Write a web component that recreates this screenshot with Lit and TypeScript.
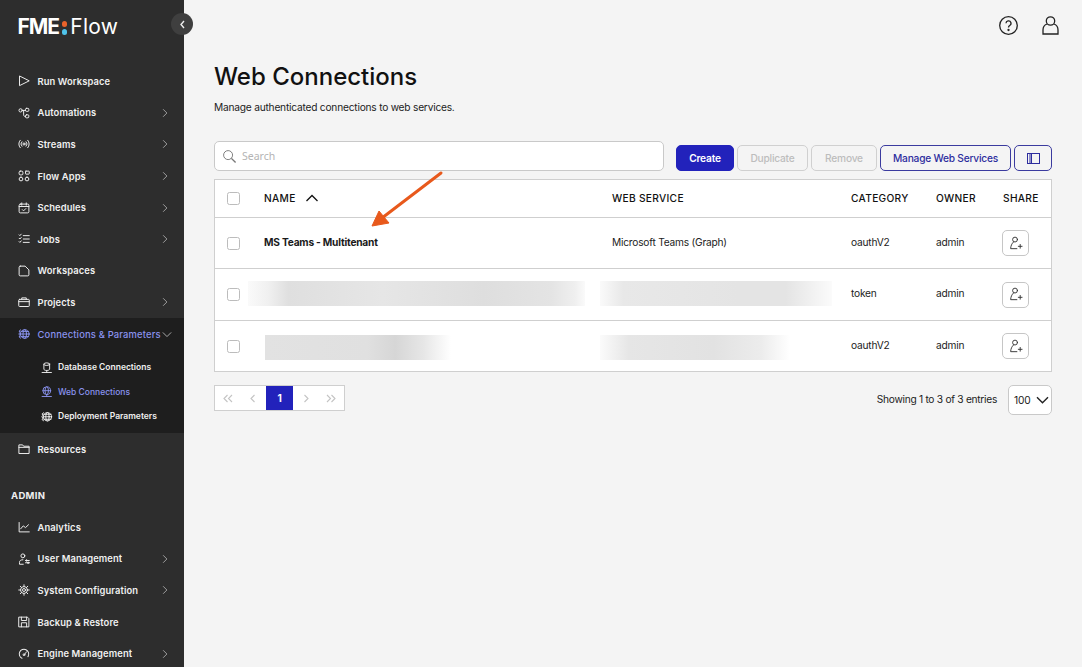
import { LitElement, html, css, svg } from "lit";
import { customElement } from "lit/decorators.js";

const s = (body: unknown, cls = "ic") => html`<svg class=${cls} viewBox="0 0 16 16" fill="none" stroke="currentColor" stroke-width="1.300" stroke-linecap="round" stroke-linejoin="round">${body}</svg>`;

const gear = svg`<circle cx="8" cy="8" r="4.600"/><circle cx="8" cy="8" r="2"/><path d="M8 1v2.200M8 12.800V15M1 8h2.200M12.800 8H15M3 3l1.600 1.600M11.400 11.400 13 13M3 13l1.600-1.600M11.400 4.600 13 3"/>`;
const globeGear = svg`<circle cx="9" cy="8" r="5.800"/><ellipse cx="9" cy="8" rx="2.400" ry="5.800"/><path d="M3.200 8h11.600M4 4.500h10M4 11.500h10M3.500 2.500 1.500 4l1 2-1.300 2 1.300 2-1 2 2 1.500"/>`;
const icons: Record<string, unknown> = {
  run: svg`<path d="M2 1.800v12.400L14.500 8z"/>`,
  auto: svg`<circle cx="3.500" cy="4.500" r="2.200"/><rect x="10" y="1.800" width="4.400" height="4" rx="1.200"/><rect x="10" y="10.400" width="4.400" height="4" rx="1.200"/><path d="M5.700 4.500H10M7.500 4.500v6c0 1 .6 2 1.500 2h1"/>`,
  streams: svg`<circle cx="8" cy="8" r="1.400"/><path d="M5.200 5a4.200 4.200 0 0 0 0 6M10.800 5a4.200 4.200 0 0 1 0 6M3 3a7.200 7.200 0 0 0 0 10M13 3a7.200 7.200 0 0 1 0 10"/>`,
  apps: svg`<rect x="1.500" y="1.500" width="5" height="5" rx="1.500"/><rect x="10" y="1.500" width="5" height="4" rx=".6"/><rect x="1.500" y="9.500" width="5" height="5" rx="2.500"/><rect x="9.500" y="9.500" width="5" height="5" rx="2.500"/>`,
  sched: svg`<rect x="1.500" y="2.800" width="13" height="11.700" rx="1.600"/><path d="M1.500 6h13M5 1.200v3M11 1.200v3M5.800 10.200l1.600 1.600 3-3"/>`,
  jobs: svg`<path d="M7 3.500h8M7 8h8M7 12.500h8M1.500 2.500l1 1 1.800-2M1.500 7l1 1 1.800-2M1.500 11.500l1 1 1.800-2"/>`,
  work: svg`<path d="M3 1.500h6.500L14.500 6.500V13a1.500 1.500 0 0 1-1.500 1.500H3A1.500 1.500 0 0 1 1.500 13V3A1.500 1.500 0 0 1 3 1.500z"/>`,
  proj: svg`<rect x="1" y="4.500" width="14" height="9.500" rx="1"/><path d="M5 4.500V2.500h6v2M1 7.500h14"/>`,
  conn: globeGear,
  db: svg`<ellipse cx="8" cy="3" rx="4" ry="1.800"/><path d="M4 3v7c0 1 1.800 1.800 4 1.800s4-.8 4-1.800V3M8 11.800v2.600M1.500 14.600h13"/>`,
  web: svg`<circle cx="8" cy="6.500" r="5.400"/><ellipse cx="8" cy="6.500" rx="2.400" ry="5.400"/><path d="M2.600 6.500h10.800M8 12v2.500M1.500 14.600h13"/>`,
  dep: globeGear,
  res: svg`<path d="M1.200 13.500v-11h5l1.300 1.800h7.300v9.200zM1.200 5.800h13.600"/>`,
  ana: svg`<path d="M1.500 2v12.500H15M3.500 10.500l3.500-4 3 2.300 4-3.800"/>`,
  user: svg`<circle cx="6.500" cy="3.800" r="2.600"/><path d="M6.500 9c-3 0-4.500 1.300-4.500 3.500V15h5M10 10h5M10 13h5"/><circle cx="11.500" cy="10" r="1"/><circle cx="13.500" cy="13" r="1"/>`,
  sys: gear,
  back: svg`<path d="M1.500 1.500h11l2 2v11h-13zM4.500 1.500v4.500h7V1.500M4.500 14.500V9h7v5.500"/>`,
  eng: svg`<circle cx="8" cy="8" r="6.300" stroke-dasharray="30 9" transform="rotate(115 8 8)"/><circle cx="8" cy="9" r="1.200"/><path d="M9 8l2.500-3"/>`,
};

const chevR = html`<svg class="chev" viewBox="0 0 8 12" fill="none" stroke="currentColor" stroke-width="1.200"><path d="M1.500 1 6.500 6l-5 5"/></svg>`;
const chevD = html`<svg class="chev-d" viewBox="0 0 12 8" fill="none" stroke="currentColor" stroke-width="1.200"><path d="M1 1.500 6 6.500l5-5"/></svg>`;
const shareIcon = html`<svg class="share-ic" viewBox="0 0 16 16" fill="none" stroke="currentColor" stroke-width="1" stroke-linecap="round"><circle cx="7.500" cy="3.800" r="2.600"/><path d="M5.800 6.500C4 8 3 10.500 2.800 13.500H9.500M11 11h4M13 9v4"/></svg>`;

const top = [
  ["run", "Run Workspace", 0], ["auto", "Automations", 1], ["streams", "Streams", 1], ["apps", "Flow Apps", 1],
  ["sched", "Schedules", 1], ["jobs", "Jobs", 1], ["work", "Workspaces", 0], ["proj", "Projects", 1],
] as const;
const subs = [["db", "Database Connections", 0], ["web", "Web Connections", 1], ["dep", "Deployment Parameters", 0]] as const;
const admin = [
  ["ana", "Analytics", 0], ["user", "User Management", 1], ["sys", "System Configuration", 1],
  ["back", "Backup & Restore", 0], ["eng", "Engine Management", 1],
] as const;

const rows = [
  { name: "MS Teams - Multitenant", svc: "Microsoft Teams (Graph)", cat: "oauthV2", h: 51 },
  { cat: "token", h: 52, blurA: "blur a2", blurB: "blur b2" },
  { cat: "oauthV2", h: 51, blurA: "blur a3", blurB: "blur b3" },
];

@customElement("app-root")
export class AppRoot extends LitElement {
  static styles = css`
    :host { display: block; width: 1082px; height: 667px; overflow: hidden; font-family: Inter, "Liberation Sans", sans-serif; position: relative; }
    .page { display: flex; height: 667px; background: #f4f4f4; }
    .side { width: 184px; flex: none; background: #2d2d2d; color: #f0f0f0; overflow: hidden; position: relative; }
    .logo { height: 65.500px; box-sizing: border-box; padding: 13px 0 0 17.500px; display: flex; align-items: flex-start; font-size: 21px; line-height: 28px; color: #fff; }
    .logo b { font-weight: 700; letter-spacing: -1.100px; }
    .logo .dots { display: flex; flex-direction: column; gap: 2.500px; margin: 8px 3px 0 3px; }
    .logo i { width: 5.500px; height: 5.500px; border-radius: 50%; background: #e8622a; display: block; }
    .logo i + i { background: #4fc3ea; }
    .logo span { font-weight: 400; letter-spacing: .2px; }
    .item { height: 31.600px; display: flex; align-items: center; padding-left: 18px; font-size: 9.400px; font-weight: 600; letter-spacing: .1px; }
    .ic { width: 12px; height: 12px; flex: none; margin-right: 7.500px; }
    .label { flex: 1; white-space: nowrap; }
    .chev { width: 6px; height: 10px; margin-right: 16px; color: #a8a8a8; flex: none; }
    .chev-d { width: 10px; height: 7px; color: #a8a8a8; flex: none; margin-right: 12px; margin-left: 1px; }
    .section { background: #1e1e1e; padding-bottom: 5px; height: 115.200px; box-sizing: border-box; }
    .section > .item { color: #8a93ee; font-weight: 500; letter-spacing: .17px; }
    .section > .item .label { flex: none; }
    .subs { padding-top: 5.400px; }
    .sub { height: 24.500px; display: flex; align-items: center; padding-left: 41px; font-size: 8.500px; font-weight: 600; }
    .sub .ic { width: 11.500px; height: 11.500px; margin-right: 5.500px; }
    .sub.on { color: #8a93ee; font-weight: 500; }
    .admin { padding: 20.800px 0 5.600px 11px; font-size: 9.500px; line-height: 20px; font-weight: 700; letter-spacing: .3px; }
    .collapse { position: absolute; left: 171px; top: 13px; width: 22px; height: 22px; border-radius: 50%; background: #3f3f3f; color: #eee; display: flex; align-items: center; justify-content: center; z-index: 2; }
    .collapse svg { width: 7px; height: 9px; }

    .main { flex: 1; min-width: 0; padding: 0 30px; color: #1b1b1b; letter-spacing: -.22px; }
    .top { height: 50px; display: flex; justify-content: flex-end; align-items: center; gap: 21px; margin-right: -9px; color: #222; }
    .top svg { width: 21px; height: 21px; }
    .top svg:first-child { margin-left: -1px; }
    h1 { margin: 12px 0 0; font-size: 24px; line-height: 30px; font-weight: 500; color: #111; letter-spacing: 0; }
    .desc { margin: 8px 0 0; font-size: 10.200px; line-height: 14px; color: #222; }
    .tools { display: flex; align-items: flex-end; margin-top: 27px; height: 30px; }
    .search { width: 450px; height: 30px; box-sizing: border-box; border: 1px solid #c9c9c9; border-radius: 5px; background: #fff; display: flex; align-items: center; padding-left: 7px; gap: 5px; color: #b4b4b4; font-size: 10.500px; margin-right: 12px; font-family: "Noto Sans", sans-serif; letter-spacing: 0; }
    .search svg { width: 15px; height: 15px; color: #777; }
    .btn { height: 26px; box-sizing: border-box; border-radius: 5px; border: 1px solid #d0d0d0; display: flex; align-items: center; justify-content: center; font-size: 10.200px; font-weight: 500; margin-right: 3px; color: #bdbdbd; }
    .btn.pri { background: #2222bb; color: #fff; border-color: #2222bb; width: 58px; font-weight: 600; }
    .btn.out { border-color: #3b3b9f; color: #2d2d9e; }
    .dup { width: 71px; } .rem { width: 66px; } .mws { width: 131px; } .col { width: 38px; margin-right: 0; }
    .col svg { width: 13px; height: 11px; }
    .table { margin-top: 8px; background: #fff; border: 1px solid #cfcfcf; box-sizing: border-box; height: 193px; }
    .row { display: grid; grid-template-columns: 49px 348px 239px 85px 67px 1fr; align-items: center; border-top: 1px solid #cfcfcf; font-size: 10.200px; color: #222; box-sizing: border-box; }
    .row.head { border-top: 0; height: 37px; font-weight: 500; color: #111; letter-spacing: .3px; }
    .t { padding-bottom: 3px; }
    .head .t { padding-bottom: 2px; }
    .cb { width: 13px; height: 13px; box-sizing: border-box; border: 1px solid #bcbcbc; border-radius: 2.500px; margin-left: 12px; background: #fff; }
    .sort { display: flex; align-items: center; gap: 9px; }
    .sort svg { width: 14px; height: 8px; }
    .nm { font-weight: 700; color: #1a1a1a; }
    .share { width: 27px; height: 26px; box-sizing: border-box; border: 1px solid #c6c6c6; border-radius: 5px; display: flex; align-items: center; justify-content: center; color: #333; background: #fff; margin-left: -1px; }
    .share-ic { width: 15px; height: 15px; }
    .blur { height: 25px; }
    .a2 { width: 337px; margin: -2px 0 0 -16px; background: linear-gradient(90deg, #fafafa, #f0f0f0 6%, #dfdfdf 12%, #e6e6e6 40%, #dedede 70%, #e4e4e4 90%, #efefef 97%, #fafafa); }
    .b2 { width: 232px; margin: -2px 0 0 -12px; background: linear-gradient(90deg, #fafafa, #e8e8e8 10%, #e4e4e4 60%, #e4e4e4 80%, #fbfbfb); }
    .a3 { width: 186px; margin: 2px 0 0 1px; background: linear-gradient(90deg, #e2e2e2, #e0e0e0 55%, #d6d6d6 70%, #e6e6e6 85%, #fff); }
    .b3 { width: 190px; margin: 2px 0 0 -12px; background: linear-gradient(90deg, #fbfbfb, #e6e6e6 15%, #e2e2e2 60%, #ececec 85%, #fff); }
    .foot { display: flex; align-items: flex-start; margin-top: 13px; }
    .pager { display: flex; height: 26px; box-sizing: border-box; border: 1px solid #cfcfcf; background: #fff; width: 131px; }
    .pg { flex: 1; display: flex; align-items: center; justify-content: center; color: #c4c4c4; }
    .pg svg { width: 12px; height: 9px; }
    .pg.cur { background: #2222bb; color: #fff; font-size: 10px; font-weight: 700; flex: none; width: 27px; }
    .info { margin-left: auto; font-size: 10.200px; color: #222; line-height: 28px; margin-right: 11px; letter-spacing: -.28px; }
    .sel { width: 44px; height: 30px; box-sizing: border-box; border: 1px solid #c9c9c9; border-radius: 5px; background: #fff; display: flex; align-items: center; padding-left: 5px; justify-content: space-between; font-size: 10.200px; color: #222; padding-right: 2px; }
    .sel svg { width: 13px; height: 8px; }
    .arrow { position: absolute; left: 360px; top: 165px; width: 90px; height: 70px; pointer-events: none; }
  `;

  private item(i: readonly [string, string, number]) {
    return html`<div class="item">${s(icons[i[0]])}<span class="label">${i[1]}</span>${i[2] ? chevR : ""}</div>`;
  }

  private pg(d: string) {
    return html`<div class="pg"><svg viewBox="0 0 12 9" fill="none" stroke="currentColor" stroke-width="1.100"><path d=${d}/></svg></div>`;
  }

  render() {
    return html`<div class="page">
      <aside class="side">
        <div class="logo"><b>FME</b><div class="dots"><i></i><i></i></div><span>Flow</span></div>
        ${top.map((i) => this.item(i))}
        <div class="section">
          <div class="item">${s(icons.conn)}<span class="label">Connections &amp; Parameters</span>${chevD}</div>
          <div class="subs">
            ${subs.map((i) => html`<div class="sub ${i[2] ? "on" : ""}">${s(icons[i[0]])}<span>${i[1]}</span></div>`)}
          </div>
        </div>
        ${this.item(["res", "Resources", 0])}
        <div class="admin">ADMIN</div>
        ${admin.map((i) => this.item(i))}
      </aside>
      <div class="collapse"><svg viewBox="0 0 7 9" fill="none" stroke="currentColor" stroke-width="1.400"><path d="M5 1 2 4.500 5 8"/></svg></div>
      <main class="main">
        <div class="top">
          <svg viewBox="0 0 21 21" fill="none" stroke="currentColor" stroke-width="1.300"><circle cx="10.500" cy="10.500" r="8.800"/><path d="M8 8.300a2.500 2.500 0 1 1 3.700 2.200c-.8.500-1.200 1-1.200 2"/><circle cx="10.500" cy="15" r=".5" fill="currentColor"/></svg>
          <svg viewBox="0 0 21 21" fill="none" stroke="currentColor" stroke-width="1.300"><circle cx="10.500" cy="6" r="4.200"/><path d="M7 9c-3 1-4 3-4 6v4h15v-4c0-3-1-5-4-6"/></svg>
        </div>
        <h1>Web Connections</h1>
        <p class="desc">Manage authenticated connections to web services.</p>
        <div class="tools">
          <div class="search"><svg viewBox="0 0 16 16" fill="none" stroke="currentColor" stroke-width="1"><circle cx="6.500" cy="6.500" r="4.800"/><path d="m10 10 4.500 4.500" stroke-width="1.500"/></svg>Search</div>
          <div class="btn pri">Create</div>
          <div class="btn dup">Duplicate</div>
          <div class="btn rem">Remove</div>
          <div class="btn out mws">Manage Web Services</div>
          <div class="btn out col"><svg viewBox="0 0 13 11" fill="none" stroke="currentColor" stroke-width="1"><rect x=".5" y=".5" width="12" height="10"/><path d="M3 .5v10M4.500 .5v10"/></svg></div>
        </div>
        <div class="table">
          <div class="row head">
            <div class="cb"></div>
            <div class="sort t">NAME <svg viewBox="0 0 14 8" fill="none" stroke="currentColor" stroke-width="1.300"><path d="M1.500 7 7 1.500 12.500 7"/></svg></div>
            <div class="t">WEB SERVICE</div><div class="t">CATEGORY</div><div class="t">OWNER</div><div class="t">SHARE</div>
          </div>
          ${rows.map((r) => html`<div class="row" style="height:${r.h}px">
            <div class="cb"></div>
            ${r.name ? html`<div class="nm t">${r.name}</div>` : html`<div class=${r.blurA}></div>`}
            ${r.svc ? html`<div class="t">${r.svc}</div>` : html`<div class=${r.blurB}></div>`}
            <div class="t">${r.cat}</div><div class="t">admin</div>
            <div class="share">${shareIcon}</div>
          </div>`)}
        </div>
        <div class="foot">
          <div class="pager">
            ${this.pg("M5.500 1 2 4.500 5.500 8M10 1 6.500 4.500 10 8")}
            ${this.pg("M7.500 1 4 4.500 7.500 8")}
            <div class="pg cur">1</div>
            ${this.pg("M4.500 1 8 4.500 4.500 8")}
            ${this.pg("M2 1l3.500 3.500L2 8M6.500 1 10 4.500 6.500 8")}
          </div>
          <div class="info">Showing 1 to 3 of 3 entries</div>
          <div class="sel">100<svg viewBox="0 0 13 8" fill="none" stroke="currentColor" stroke-width="1.400"><path d="M1 1.200 6.500 6.800 12 1.200"/></svg></div>
        </div>
      </main>
      <svg class="arrow" viewBox="360 165 90 70"><path d="M441 173 382 218" stroke="#e8591c" stroke-width="3" stroke-linecap="round"/><path d="M372 226l7-15 10 12z" fill="#e8591c" stroke="#e8591c" stroke-linejoin="round"/></svg>
    </div>`;
  }
}
